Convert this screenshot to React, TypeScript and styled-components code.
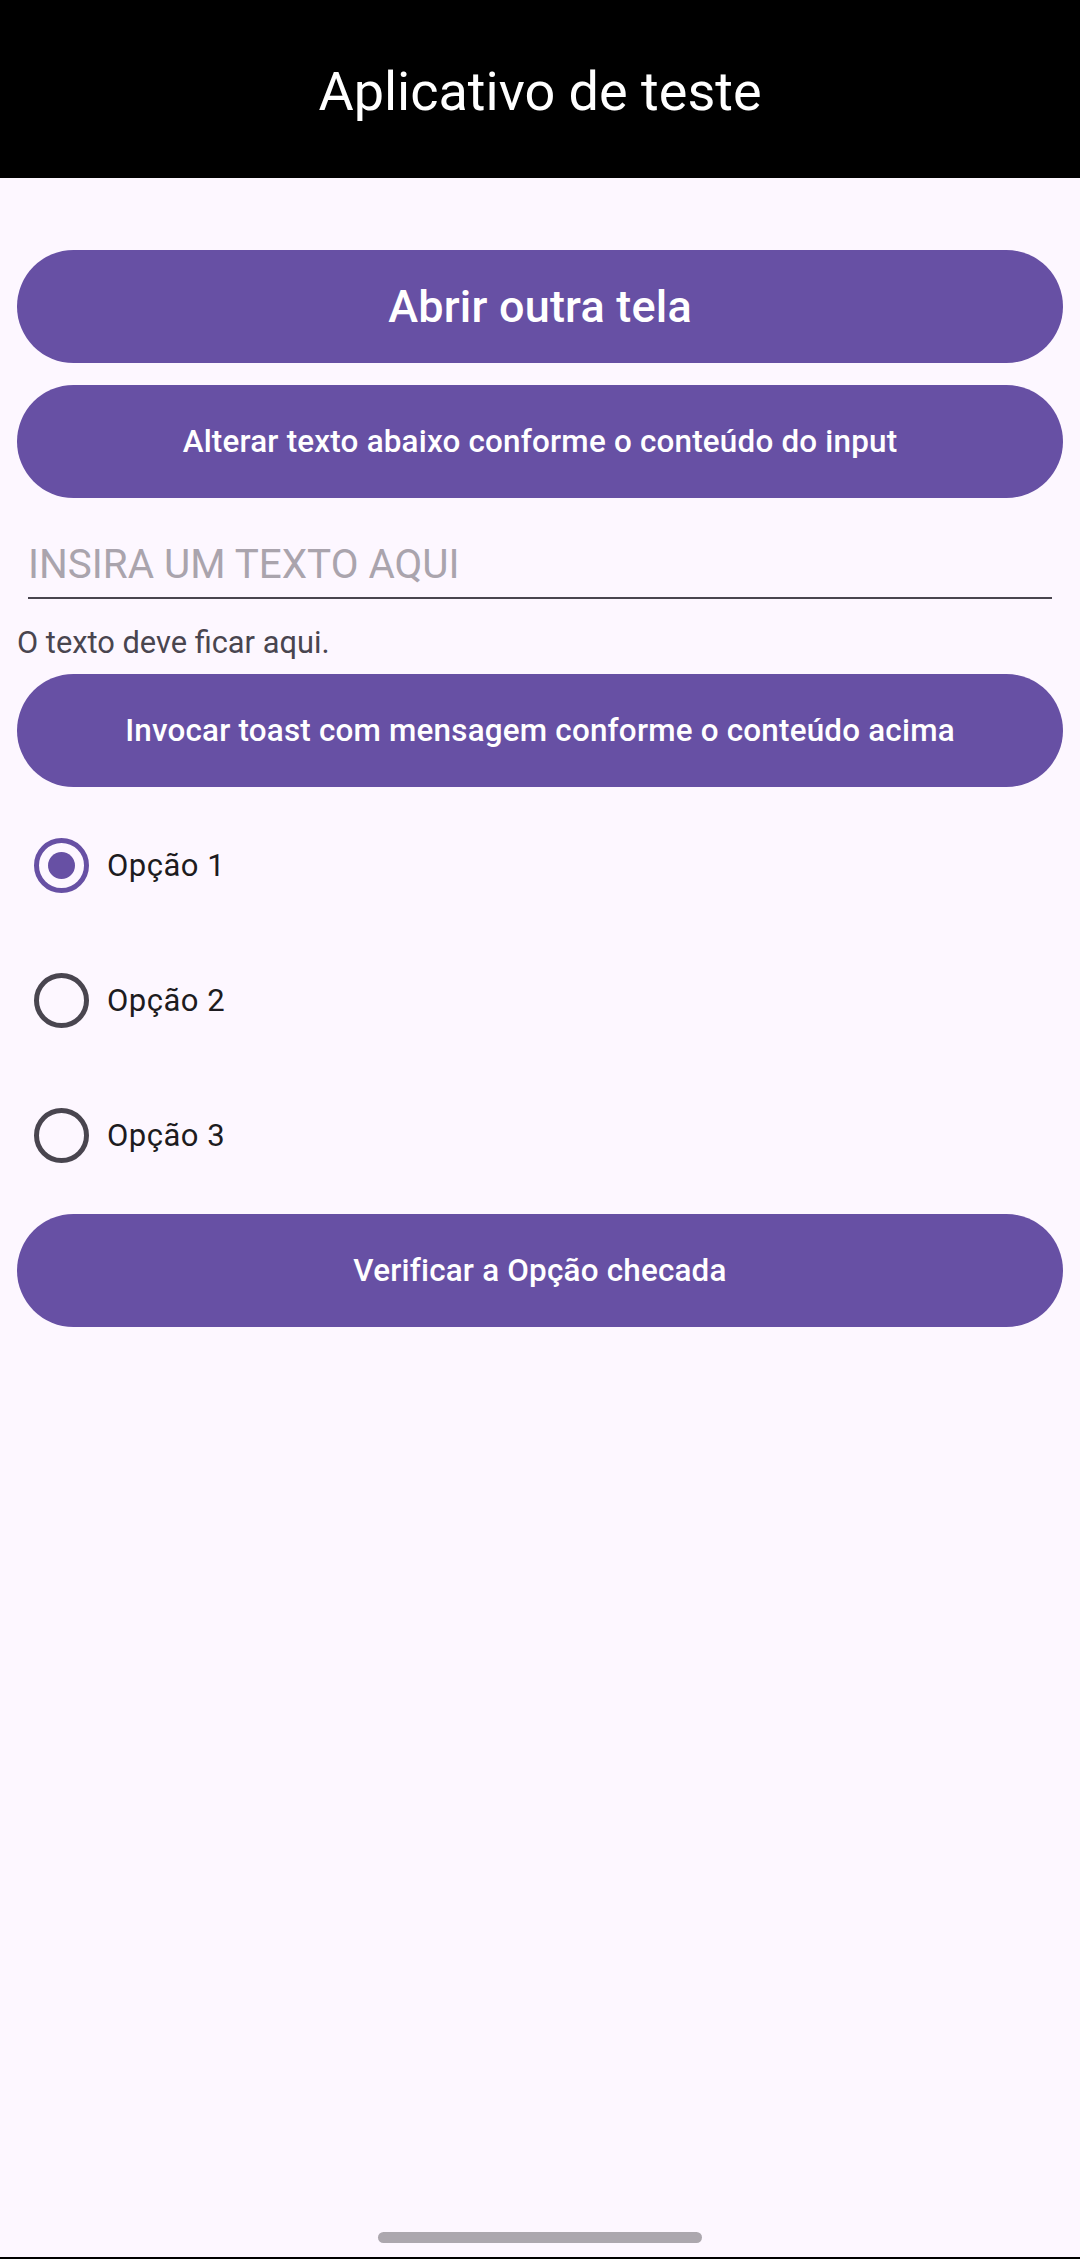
import React, { useState } from 'react'
import styled, { createGlobalStyle } from 'styled-components'

const GlobalStyle = createGlobalStyle`
  html, body {
    margin: 0;
    padding: 0;
    background: #fdf7ff;
  }
  body {
    font-family: Roboto, "Noto Sans", "Liberation Sans", sans-serif;
  }
`

const Screen = styled.div`
  display: flex;
  flex-direction: column;
  min-height: 2259px;
  background: #fdf7ff;
`

const AppBar = styled.header`
  display: flex;
  align-items: center;
  justify-content: center;
  height: 178px;
  padding-top: 4px;
  box-sizing: border-box;
  background: #000;
  color: #fff;
  font-size: 54px;
  font-weight: 400;
`

const Content = styled.main`
  display: flex;
  flex-direction: column;
  padding: 72px 17px 0;
`

const PillButton = styled.button<{ $size: number; $gap: number }>`
  display: flex;
  align-items: center;
  justify-content: center;
  height: 113px;
  margin-top: ${(p) => p.$gap}px;
  border: none;
  border-radius: 57px;
  background: #6750a4;
  color: #fff;
  font-family: Roboto, "Noto Sans", sans-serif;
  font-size: ${(p) => p.$size}px;
  font-weight: 500;
  letter-spacing: 0.2px;
  cursor: pointer;
`

const TextInput = styled.input`
  margin: 43px 11px 0;
  padding: 0 0 9px;
  height: 47px;
  box-sizing: content-box;
  border: none;
  border-bottom: 2px solid #49454f;
  background: transparent;
  font-family: Roboto, sans-serif;
  font-size: 40.4px;
  color: #1d1b20;
  outline: none;

  &::placeholder {
    color: #aaa4ad;
  }
`

const OutputText = styled.p`
  margin: 25px 0 0;
  font-size: 30.8px;
  color: #49454f;
  line-height: normal;
`

const RadioGroup = styled.div`
  display: flex;
  flex-direction: column;
  margin-top: 11px;
`

const RadioRow = styled.label`
  display: flex;
  align-items: center;
  height: 135px;
  padding-left: 17px;
  gap: 18px;
  cursor: pointer;
`

const RadioCircle = styled.span<{ $checked: boolean }>`
  display: flex;
  align-items: center;
  justify-content: center;
  width: 55px;
  height: 55px;
  box-sizing: border-box;
  border-radius: 50%;
  border: 5.5px solid ${(p) => (p.$checked ? '#6750a4' : '#49454f')};

  &::after {
    content: '';
    width: 27.5px;
    height: 27.5px;
    border-radius: 50%;
    background: #6750a4;
    display: ${(p) => (p.$checked ? 'block' : 'none')};
  }
`

const RadioLabel = styled.span`
  font-size: 31px;
  color: #1d1b20;
  letter-spacing: 0.5px;
`

const Spacer = styled.div`
  flex: 1;
`

const HomeIndicator = styled.div`
  align-self: center;
  width: 324px;
  height: 11px;
  border-radius: 6px;
  background: #aca7ae;
  margin-bottom: 14px;
`

const BottomEdge = styled.div`
  height: 2px;
  background: #000;
`

const options = ['Opção 1', 'Opção 2', 'Opção 3']

export default function App() {
  const [selected, setSelected] = useState(0)

  return (
    <>
      <GlobalStyle />
      <Screen>
        <AppBar>Aplicativo de teste</AppBar>
        <Content>
          <PillButton $size={45} $gap={0}>Abrir outra tela</PillButton>
          <PillButton $size={31.4} $gap={22}>
            Alterar texto abaixo conforme o conteúdo do input
          </PillButton>
          <TextInput placeholder="INSIRA UM TEXTO AQUI" />
          <OutputText>O texto deve ficar aqui.</OutputText>
          <PillButton $size={31.4} $gap={13}>
            Invocar toast com mensagem conforme o conteúdo acima
          </PillButton>
          <RadioGroup>
            {options.map((o, i) => (
              <RadioRow key={o} onClick={() => setSelected(i)}>
                <RadioCircle $checked={selected === i} />
                <RadioLabel>{o}</RadioLabel>
              </RadioRow>
            ))}
          </RadioGroup>
          <PillButton $size={31.4} $gap={11}>Verificar a Opção checada</PillButton>
        </Content>
        <Spacer />
        <HomeIndicator />
        <BottomEdge />
      </Screen>
    </>
  )
}
